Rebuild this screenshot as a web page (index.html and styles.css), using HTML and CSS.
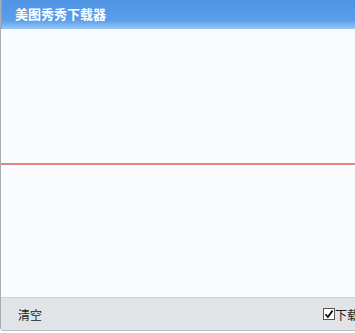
FILE: index.html
```html
<!DOCTYPE html>
<html lang="zh-CN">
<head>
    <meta charset="UTF-8">
    <title>美图秀秀下载器</title>
    <link rel="stylesheet" href="styles.css">
</head>
<body>

<div class="window">
    <div class="titlebar">美图秀秀下载器</div>
    <div class="list">
        <div class="progress-line"></div>
    </div>
    <div class="footer">
        <a class="clear" href="#">清空</a>
        <label class="auto">
            <span class="check">
                <svg width="10" height="10" viewBox="0 0 10 10"><path d="M1.5 5.2 L3.8 8 L8.6 1.6" fill="none" stroke="#111" stroke-width="1.8"/></svg>
            </span>下载完成后自动安装
        </label>
    </div>
</div>

</body>
</html>
```

FILE: styles.css
```css
body {
    margin: 0;
    overflow: hidden;
    background: #ffffff;
    font-family: "Noto Sans CJK SC", "Liberation Sans", sans-serif;
}
.window {
    width: 480px;
    height: 330px;
    display: flex;
    flex-direction: column;
    border-left: 1px solid #a9adb2;
    border-bottom: 1px solid #b8bcc0;
    border-bottom-left-radius: 4px;
    background: #f9fbfd;
    overflow: hidden;
}
.titlebar {
    height: 29px;
    line-height: 27px;
    padding-left: 14px;
    color: #ffffff;
    font-size: 13px;
    font-weight: bold;
    background: linear-gradient(#4f95e4, #5a9eea 70%, #97c6f4);
    box-shadow: inset 1px 0 0 #6fbf6a;
}
.list {
    flex: 1;
    padding-top: 134px;
}
.progress-line {
    height: 2px;
    background: #e08686;
}
.footer {
    height: 32px;
    display: flex;
    align-items: center;
    background: #e1e4e7;
    border-top: 1px solid #cfd3d7;
    font-size: 12px;
    color: #222;
}
.clear {
    margin-left: 17px;
    color: #222;
    text-decoration: none;
}
.auto {
    display: flex;
    align-items: center;
    margin-left: 281px;
    white-space: nowrap;
}
.check {
    width: 10px;
    height: 10px;
    border: 1px solid #555;
    background: #fff;
    display: flex;
    align-items: center;
    justify-content: center;
}
```
